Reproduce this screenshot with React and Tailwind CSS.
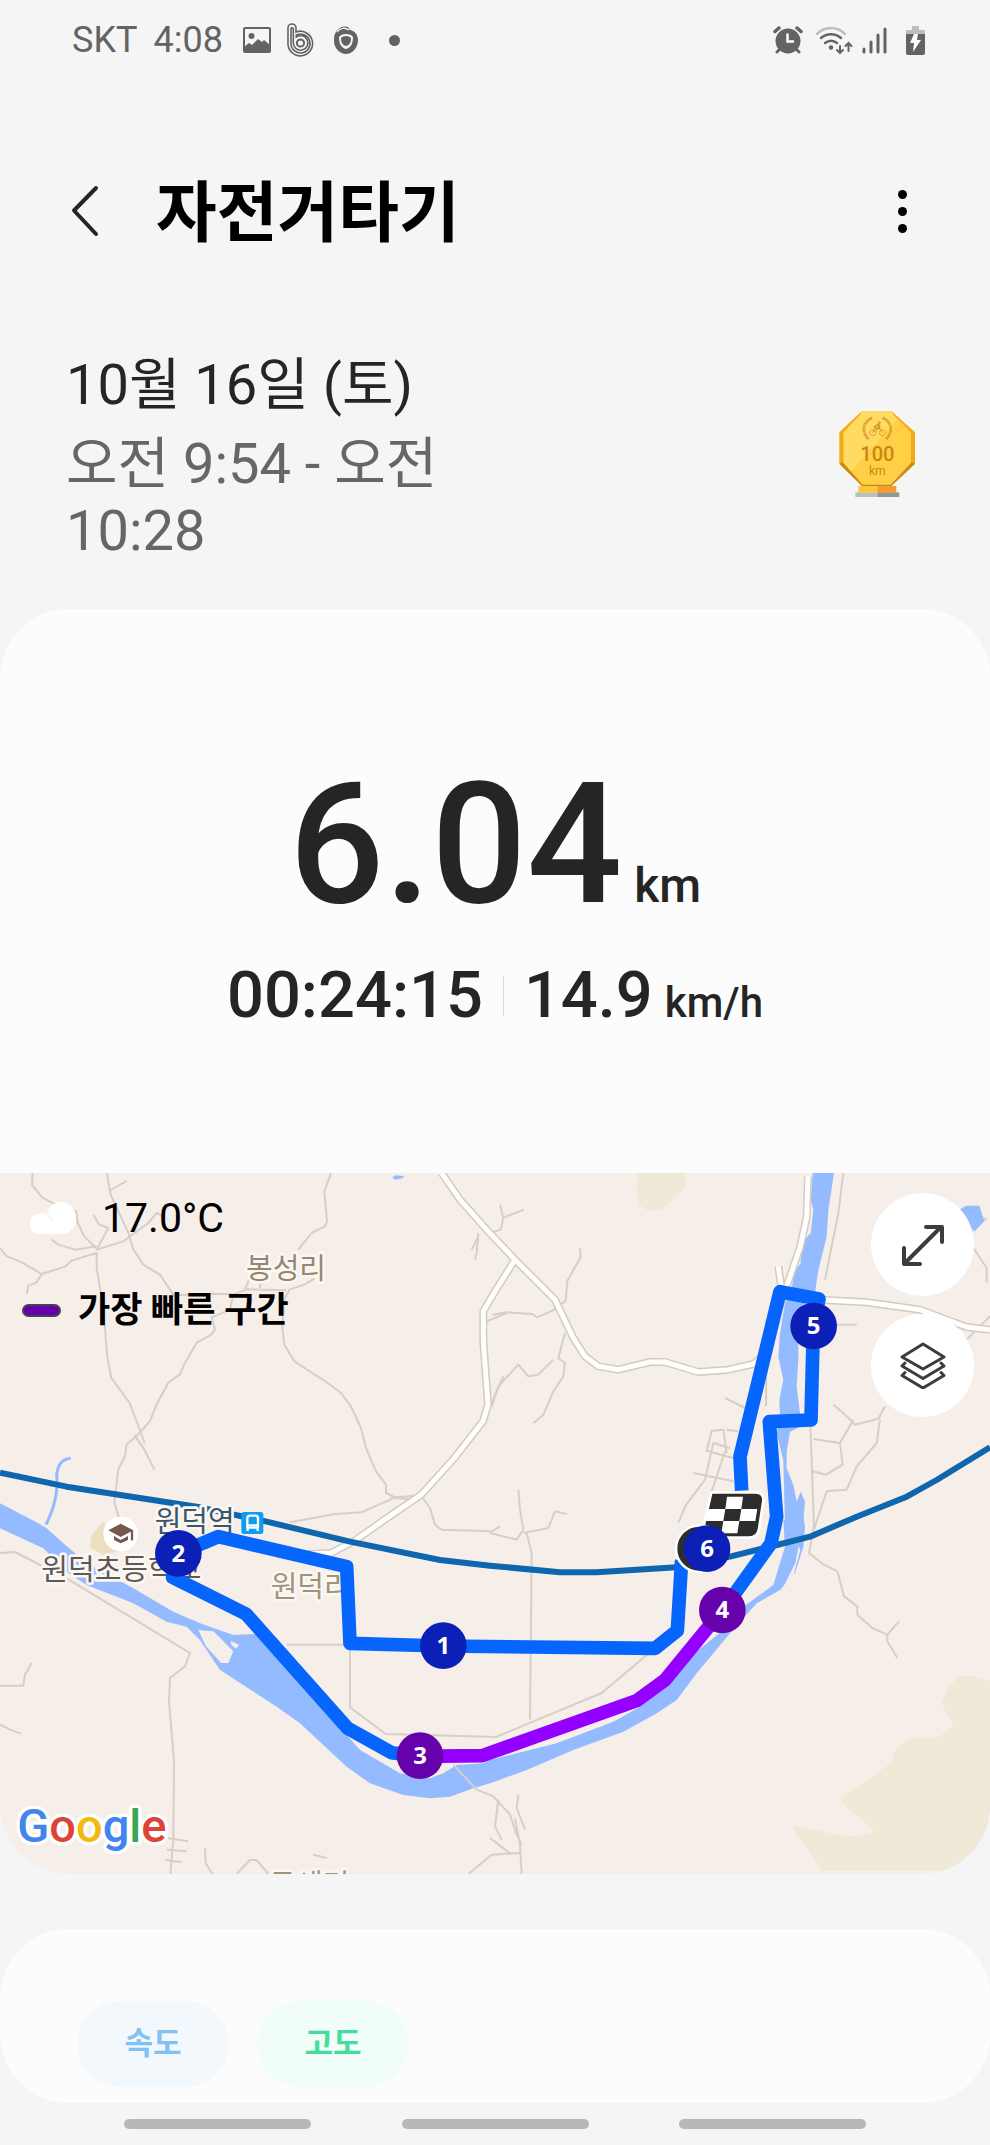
import React from "react";

const markers = [
  { n: 5, x: 2441, y: 459, color: "#0c20b8" },
  { n: 1, x: 1330, y: 1418, color: "#0c20b8" },
  { n: 2, x: 535, y: 1141, color: "#0c20b8" },
  { n: 3, x: 1260, y: 1748, color: "#6602ac" },
  { n: 4, x: 2167, y: 1311, color: "#6602ac" },
  { n: 6, x: 2121, y: 1127, color: "#0c20b8" },
];

const labels = [
  { text: "봉성리", x: 738, y: 318, color: "#968773" },
  { text: "원덕역", x: 464, y: 1078, color: "#37576b" },
  { text: "원덕초등학교", x: 124, y: 1222, color: "#5c5856" },
  { text: "원덕리", x: 812, y: 1273, color: "#a0937c" },
  { text: "금세리", x: 808, y: 2166, color: "#a0937c" },
];

const StatusBar = () => (
  <div className="flex h-20 items-center justify-between pl-[72px] pr-[65px] text-[36px] leading-none text-[#636363]">
    <div className="flex items-center">
      <span>SKT</span>
      <span className="ml-4">4:08</span>
      <svg className="ml-5 h-[26px] w-7" viewBox="0 0 28 26" fill="none">
        <rect x="1" y="1" width="26" height="24" rx="1" stroke="#636363" strokeWidth="2" />
        <circle cx="8.5" cy="9" r="3" fill="#636363" />
        <path d="M1 20l5-4 3 2 6-6 4 3 2-2 6 5v7H1z" fill="#636363" />
      </svg>
      <svg className="ml-4 h-[34px] w-[27px]" viewBox="0 0 27 34" fill="none" stroke="#636363" strokeWidth="1.6">
        <path d="M1 20V5a4 4 0 0 1 8 0v4a12.300 12.300 0 1 1-8 11z" />
        <path d="M4 20V5.500a1.300 1.300 0 0 1 2.300 0V20a7.300 7.300 0 1 0 3-6v-2a9.500 9.500 0 1 1-5.300 8z" />
        <circle cx="13.500" cy="20" r="3.600" strokeWidth="2" />
      </svg>
      <svg className="ml-5 h-7 w-6" viewBox="0 0 24 28" fill="none">
        <path d="M1 8C3 3 8-1 14 1l2 3c5 1 8 5 8 10 0 8-6 14-12 14S0 22 0 15c0-3 0-5 1-7z" fill="#636363" />
        <path d="M3 6C6 2 11 1 15 4" stroke="#f5f5f5" strokeWidth="1.300" />
        <path d="M12 8c3 0 6 1 7 3 0 6-2 11-7 12-5-1-7-6-7-12 1-2 4-3 7-3z" fill="#f5f5f5" />
        <path d="M12 10c3 0 4 1 5 2 0 4-1 7-5 8-4-1-5-4-5-8 1-1 2-2 5-2z" fill="#636363" />
      </svg>
      <span className="ml-[31px] size-[11px] rounded-full bg-[#636363]" />
    </div>
    <div className="flex items-center">
      <svg className="h-7 w-[30px]" viewBox="0 0 30 28" fill="none" stroke="#636363" strokeLinecap="round">
        <circle cx="15" cy="15" r="12.500" fill="#636363" stroke="none" />
        <path d="M2 5.500l4-3.500M28 5.500L24 2" strokeWidth="3.500" />
        <path d="M4 26l3-3M26 26l-3-3" strokeWidth="3" />
        <path d="M14.500 7.500v8H21" stroke="#fff" strokeWidth="2.500" strokeLinecap="butt" />
      </svg>
      <svg className="ml-3 h-[29px] w-[38px]" viewBox="0 0 38 29" fill="none" stroke="#636363" strokeWidth="2.400" strokeLinecap="round">
        <path d="M2 8c8-8 20-8 28 0" stroke="#bdbdbd" />
        <path d="M6 12c6-5 14-5 20 0M10 17c4-3 8-3 12 0" />
        <circle cx="16" cy="21.500" r="2.200" fill="#636363" stroke="none" />
        <path d="M25 20v7m-3-3l3 3 3-3M33.500 25v-8m-3 3l3-3 3 3" strokeWidth="2" />
      </svg>
      <svg className="ml-2 h-7 w-[26px]" viewBox="0 0 26 28" stroke="#636363" strokeWidth="3" strokeLinecap="round">
        <path d="M3 23v3M10 16v10M17 9v17M24 3v23" />
      </svg>
      <svg className="ml-[19px] h-[29px] w-[19px]" viewBox="0 0 19 29">
        <path d="M6 0h7v4h5a1 1 0 0 1 1 1v3H0V5a1 1 0 0 1 1-1h5z" fill="#bdbdbd" />
        <path d="M0 8h19v19a2 2 0 0 1-2 2H2a2 2 0 0 1-2-2z" fill="#636363" />
        <path d="M8 8h4l-1 6h4L7 26l1-9H4z" fill="#fff" />
      </svg>
    </div>
  </div>
);

const Badge = () => (
  <svg className="mt-[58px] h-[88px] w-[78px] shrink-0" viewBox="170 90 234 264" role="img" aria-label="100 km">
    <path d="M222 337h66v14h-66z" fill="#b6c3b8" />
    <path d="M288 337h66v14h-66z" fill="#8d9794" />
    <path d="M231 318h57v20h-57z" fill="#fbc53d" />
    <path d="M288 318h57v20h-57z" fill="#f59a2d" />
    <path d="M242 93h88l71 64v94l-71 67h-88l-68-67v-94z" fill="#f5a914" />
    <path d="M242 93h88l6 9h-99z" fill="#ffdc6b" />
    <path d="M174 251l68 67h88l71-67-11-4-65 62h-80l-60-62z" fill="#c98a12" />
    <path d="M244 97h84l61 60v92l-61 65h-84l-57-65v-92z" fill="#ffd046" />
    <path d="M244 97h84l20 20-139 157-22-25v-92z" fill="#ffdb62" />
    <g fill="none" stroke="#cf8f24">
      <path d="M272 114c-28 12-32 42-10 64M304 114c28 12 32 42 10 64" strokeWidth="8" strokeDasharray="4 2" />
      <circle cx="274" cy="158" r="9" strokeWidth="2" />
      <circle cx="303" cy="158" r="9" strokeWidth="2" />
      <path d="M274 158l8-14 14 3 7 11M284 155l4-10" strokeWidth="3" />
      <path d="M277 142l14-9 4 8-9 5" strokeWidth="5" />
      <circle cx="294" cy="128" r="3" strokeWidth="3" />
    </g>
    <text x="288" y="243" textAnchor="middle" fontSize="60" fontWeight="500" fill="#c98612">100</text>
    <text x="288" y="286" textAnchor="middle" fontSize="36" fill="#c98612">km</text>
  </svg>
);

const RouteMap = () => (
  <svg className="block h-auto w-full" viewBox="0 0 2970 2103" fill="none" strokeLinejoin="round">
    <rect width="2970" height="2103" fill="#f6eee8" />

    {/* Green areas */}
    <g fill="#efead8">
      <path d="M1915 0h140l2 35-30 40-45 35-35 5-30-20-8-50z" />
      <path d="M2970 1525l-45-17-48 2-30 30-22 50 12 30 25 35-45 38-95 3-40 40-10 35-85 60-70 45 40 45 50 35 15 22-35 10-55 2-90-20-60-12 8 30 40 50 35 55h510z" />
    </g>
    <path d="M310 1045l-35 40-5 40 40 20 45-10z" fill="#ecdfc0" />

    {/* Minor roads */}
    <g stroke="#d7cec6" strokeWidth="6">
      <path d="M98 0l-2 35 30 38 60 32 42 10 5 35 20 40 35 35M320 0l12 65 28 60 25 55 15 50 30 45 50 30 40 60M330 52l50-28M280 125l18 30 27 10-35 65 80-25 75-55 25-30 20 10M155 200l20 15 50 15 65-10" />
      <path d="M0 225l20 25 40 15 65 38 70-22 20-18 75-23 0 45 20 120 12 150 12 60 55 75 45 120M125 303l-15 25-25 10-5 25M520 367l120-5 60 2 40-15 120 3M735 350l12-30M780 345v-25M895 230l40-50 40-20 6-15-8-90 20-55M868 350l45-15 30-18M868 350l-15 30-6 85 6 50 30 50 100 65 40 30 30 40 30 65 15 60 30 70 30 40 0 25 30 15 70 5M700 364l-10 45-55 25 10 35-10 15-45 25-35 60-15 35-35 25-35 65-20 50-40 45-30 25-5 35-20 40-12 100 20 65" />
      <path d="M403 785l30 45 30 60M1435 180l-5 60-5 20m10-70l-20 40M1250 968l-65 5-100 45-80 5-135 25M1265 970l25 35 15 50 20 15 150 5 25-15M1460 445l60-25M1475 690l35-80" />
      <path d="M0 1140l45-3 165 85 360 218-15 40-45 35-3 70 15 180-2 230-10 120-15 70M500 1995l65 10M500 2030l60 5M495 2060l50 8M95 1470l-20 35-5 33H0M0 1655l30 15 32 12M860 1415h190v188l108 80 330 9 317-132 140-118M615 2025l2 45 20 33M710 2103l40-42h20l35 42M940 2045l40 10" />
      <path d="M1430 1850l50 20 50 55 20 60 15 30M1470 1995l65 50M1495 1880l-10 80 20 40M1555 1865l-5 40 25 65M1545 1935l15 80 5 88M1560 2040l-85 5-70 58M1590 1640l5-500-15-60" />
      <path d="M1555 950l5 60 10 60-20 30-80-20M1570 1080l75-15 20-50 35 8" />
      <path d="M1500 95l10 40-8 35-30 10m35-45l65-25M1740 225l2 28-40 70-5 60-40 30-45 20-15-10-80-5-40 8M1695 480l-20 75 20 15-5 40-30 45-30 70-30 25M1660 560l-45 45-30 5-30-35-60 65-20 60" />
      <path d="M2530 0l-15 120-40 200M2430 720l12 340-15 80 45 35 40 20 20 75 40 30v25l45 40 45 20 35-40m-35 40v20l30 50M2500 695l30 25 35 35 70-18 20-37M2560 740l-40 70-80-12m80 12l8 65-50 30-40-10M2640 740l-10 70-60 70-30 70-60 5-40 120M2035 1050l20-50 60-80 25-110 50 15M2180 840l-10-70-35 3-15 60 90 25M2180 770l35 5m-40 60l-40 120M2080 900l120 25M2175 675l60 30M2300 440l-2 260M2510 455h60M2900 190l60-55M2920 225l40 60v45M2900 500l70-70" />
    </g>

    {/* River */}
    <g fill="#94baff">
      <path d="M0 991L115 1051 140 1066 190 1111 260 1171 400 1246 520 1316 600 1351 700 1386 765 1383 1000 1641 1080 1731 1200 1801 1290 1816 1330 1801 1370 1776 1450 1771 1470 1761 1670 1711 1840 1646 1920 1601 2000 1541 2070 1451 2170 1371 2230 1301 2320 1236 2355 1121 2350 1041 2410 1031 2415 1061 2410 1121 2385 1201 2340 1251 2270 1291 2190 1381 2090 1501 2030 1581 1970 1621 1870 1676 1720 1731 1580 1791 1470 1831 1420 1846 1350 1871 1290 1876 1210 1866 1110 1831 1040 1781 900 1651 830 1601 660 1491 600 1401 560 1361 500 1346 400 1291 260 1236 200 1196 130 1126 0 1066z" />
      <path d="M2438 0l-6 81 8 30-8 70-30 30v60l-20 25-7 55-20 40-15 90-5 70 15 70-12 60 2 50-10 50 20 80 5 190 55-5 5-60-13-30-12 30-10-50-20-50v-50l10-60 30-15V721l-10-80 5-80v-150l50-50 10-70 25-100 5-80 17-111z" />
      <path d="M2878 110l20-12h40l15 45-28 32-35-25z" />
      <path d="M1177 12l10-5 23 2v6l-25 5z" />
    </g>
    <path d="M138 1055c30-60 36-110 32-150 4-25 10-45 42-49" stroke="#94baff" strokeWidth="9" />
    <path d="M595 1371l45 4 60 60-15 35-22 0-45-50zM692 1403l25 12-8 12-15-10zM2396 1120l-10 50-35 70 25-15 25-95z" fill="#f6eee8" />
    <path d="M1360 1775l70 75" stroke="#d7cec6" strokeWidth="6" />

    {/* Main roads */}
    {["#d3cbc2", "#fffefb"].map((color, i) => (
      <g key={color} stroke={color} strokeWidth={i === 0 ? 24 : 15}>
        <path d="M1325 0l55 80 80 90 85 90 120 120 55 115 35 55 40 30 60 10 95-23h45l100 30 90-7 75-17 25-20 20-40 30-100 65-190 20-90 4-123" />
        <path d="M1545 260l-60 95-35 60v90l14 190-15 50-90 115-95 105-110 75-85 60-75 40-110 5" />
        <path d="M2335 280l10 70M2460 380l140 8 160 22 80 30 60 22 70 8" />
      </g>
    ))}

    {/* Railway */}
    <path d="M0 899l200 42 400 62 200 43 250 60 270 55 150 17 210 20h110l240-15 160-32 140-35 100-25 140-60 150-60 90-50 160-98" stroke="#0d66ae" strokeWidth="18" />

    {/* Place names */}
    <g fontSize="87" stroke="#fbf6f2" strokeWidth="16" paintOrder="stroke">
      {labels.map((label) => (
        <text key={label.text} x={label.x} y={label.y} fill={label.color}>{label.text}</text>
      ))}
    </g>
    <circle cx="362" cy="1083" r="52" fill="#fff" />
    <path d="M325 1072l37-20 38 20-38 20zM342 1089l20 12 22-12v12l-22 10-20-10z" fill="#76594d" />
    <path d="M396 1072v30" stroke="#76594d" strokeWidth="7" />
    <rect x="724" y="1017" width="66" height="66" rx="8" fill="#109cf0" />
    <path d="M742 1064v-28q0-8 8-8h16q8 0 8 8v28z" stroke="#fff" strokeWidth="7" />
    <path d="M742 1057h32M744 1066l-2 8m30-8l2 8" stroke="#fff" strokeWidth="7" />

    {/* Ridden route */}
    <g strokeWidth="41" strokeLinecap="butt">
      <path d="M2225 953l-5-102 120-495 117 22-17 83-7 280-125 5 22 285-17 80-108 150" stroke="#0665fd" />
      <path d="M1260 1750l-85-11-132-73-305-343-220-110 17-72 120-50 385 90 10 230 280 8 635 7 67-53 13-212" stroke="#0665fd" />
      <path d="M2167 1311l-172 210-85 62-463 165-187 2" stroke="#9400ff" />
    </g>

    {/* Finish flag and start point */}
    <path d="M2134 958h132q26 0 24 26l-13 84q-4 26-30 26h-144z" fill="#2d2d2d" stroke="#fff" strokeWidth="8" />
    <path d="M2181 971h48l-5 37h-48zM2124 1008h52l-6 36h-53zM2224 1008h48l-6 36h-48zM2170 1044h48l-6 37h-48z" fill="#fff" />
    <circle cx="2098" cy="1127" r="70" fill="#2d2d2d" stroke="#fff" strokeWidth="8" />

    {markers.map((m) => (
      <g key={m.n}>
        <circle cx={m.x} cy={m.y} r="70" fill={m.color} />
        <text x={m.x} y={m.y + 25} textAnchor="middle" fontSize="72" fontWeight="700" fontFamily="Noto Sans, sans-serif" fill="#fff">
          {m.n}
        </text>
      </g>
    ))}

    <text x="52" y="2006" fontSize="141" fontWeight="500" stroke="#fff" strokeWidth="20" paintOrder="stroke">
      <tspan fill="#4285ec">G</tspan>
      <tspan fill="#dc4437">o</tspan>
      <tspan fill="#f2b90f">o</tspan>
      <tspan fill="#4285ec">g</tspan>
      <tspan fill="#3aa757">l</tspan>
      <tspan fill="#dc4437">e</tspan>
    </text>
  </svg>
);

export default function App() {
  return (
    <div className="min-h-screen bg-[#f5f5f5] font-['Roboto','Noto_Sans_CJK_KR',sans-serif] text-[#252525]">
      <StatusBar />

      <header className="mt-[87px] flex h-[88px] items-center pl-[70px] pr-[79px]">
        <button aria-label="뒤로" className="flex h-[88px] w-[86px] items-center">
          <svg className="h-[52px] w-[30px]" viewBox="0 0 30 52" fill="none" stroke="#252525" strokeWidth="4" strokeLinecap="round" strokeLinejoin="round">
            <path d="M26 3L4 25.500 26 49" />
          </svg>
        </button>
        <h1 className="pt-[6px] text-[66px] leading-[82px] font-bold text-black">자전거타기</h1>
        <button aria-label="더보기" className="ml-auto flex flex-col items-center gap-2 px-1">
          <span className="size-[9px] rounded-full bg-black" />
          <span className="size-[9px] rounded-full bg-black" />
          <span className="size-[9px] rounded-full bg-black" />
        </button>
      </header>

      <section className="flex items-start justify-between pt-[97px] pb-11 pl-[66px] pr-[74px]">
        <div className="w-1/2 text-[56px] leading-[67px]">
          <p>10월 16일 (토)</p>
          <p className="mt-3 break-keep text-[#666]">오전 9:54 - 오전 10:28</p>
        </div>
        <Badge />
      </section>

      <main>
        <section className="overflow-hidden rounded-[68px] bg-[#fcfcfc]">
          <div className="flex flex-col items-center gap-[34px] pt-[152px] pb-[145px] font-medium">
            <p className="flex items-baseline gap-3 text-[168px] leading-none">
              6.04 <span className="text-[48px] leading-none">km</span>
            </p>
            <div className="flex items-center text-[65px] leading-none">
              <p>00:24:15</p>
              <span className="mx-5 h-10 w-px bg-[#dcdcdc]" />
              <p className="flex items-baseline gap-3">
                14.9 <span className="text-[42px] leading-none">km/h</span>
              </p>
            </div>
          </div>

          <div className="relative">
            <RouteMap />
            <div className="absolute top-0 left-0 pt-[21px] pl-[22px] text-black">
              <div className="flex h-12 items-center">
                <svg className="ml-2 h-8 w-12" viewBox="0 0 48 32">
                  <path d="M10 32a10 10 0 0 1-1-20c3-1 6 0 8 1C18 5 24 0 31 0c9 0 15 7 15 16s-6 16-14 16z" fill="#fff" />
                  <path d="M17 13c2 1 4 3 5 6" stroke="#eee" fill="none" />
                </svg>
                <span className="ml-6 text-[41px] leading-none">17.0°C</span>
              </div>
              <div className="mt-11 flex h-12 items-center">
                <span className="h-[13px] w-[39px] rounded-full border-2 border-[#4a4150] bg-[#6602ac]" />
                <span className="ml-[17px] text-[35px] leading-none font-bold">가장 빠른 구간</span>
              </div>
            </div>
            <div className="absolute top-5 right-4 flex flex-col gap-[18px]">
              <button aria-label="지도 확대" className="flex size-[103px] items-center justify-center rounded-full bg-white">
                <svg className="size-[42px]" viewBox="0 0 42 42" fill="none" stroke="#3c3c3c" strokeWidth="4" strokeLinecap="round" strokeLinejoin="round">
                  <path d="M3 39L39 3M24 3h16v15M2 24v16h16" />
                </svg>
              </button>
              <button aria-label="지도 레이어" className="flex size-[103px] items-center justify-center rounded-full bg-white">
                <svg className="h-[47px] w-[46px]" viewBox="0 0 46 47" fill="none" stroke="#3c3c3c" strokeWidth="3" strokeLinecap="round" strokeLinejoin="round">
                  <path d="M23 2l21 13-21 12L2 15z" />
                  <path d="M5 21l-3 3 21 12.500L44 24l-3-3M5 30.500l-3 3L23 46l21-12.500-3-3" />
                </svg>
              </button>
            </div>
          </div>
        </section>

        <section className="mt-[55px] flex gap-7 rounded-[68px] bg-[#fcfcfc] px-[77px] pt-[72px] pb-4 text-[31px] font-bold">
          <button className="h-[86px] w-[152px] rounded-full bg-[#f3f8fd] text-[#80c1f6]">속도</button>
          <button className="h-[86px] w-[152px] rounded-full bg-[#f0fdf8] text-[#45dca0]">고도</button>
        </section>
      </main>

      <nav className="flex justify-between px-[124px] py-4">
        <button aria-label="최근 앱" className="h-[10px] w-[187px] rounded-full bg-[#b8b8b8]" />
        <button aria-label="홈" className="h-[10px] w-[187px] rounded-full bg-[#b8b8b8]" />
        <button aria-label="이전" className="h-[10px] w-[187px] rounded-full bg-[#b8b8b8]" />
      </nav>
    </div>
  );
}
